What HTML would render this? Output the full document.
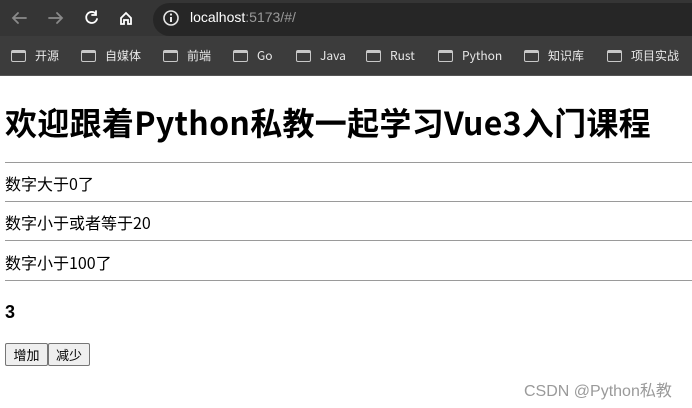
<!DOCTYPE html>
<html><head><meta charset="utf-8"><style>
*{margin:0;padding:0;box-sizing:border-box}
body{width:692px;height:408px;overflow:hidden;background:#fff;font-family:"Liberation Sans","Noto Sans CJK SC",sans-serif;position:relative}
.top{position:absolute;left:0;top:0;width:692px;height:36px;background:#353535}
.url{position:absolute;left:153px;top:3px;width:560px;height:33px;background:#262626;border-radius:17px}
.bm{position:absolute;left:0;top:36px;width:692px;height:40px;background:#3c3c3c;border-bottom:1px solid #555}
.b{position:absolute;top:12px;height:16px;line-height:16px;color:#e8e8e8;font-size:12px;white-space:nowrap;font-family:"Noto Sans CJK SC",sans-serif}
.b i{display:inline-block;vertical-align:middle;width:15px;height:12px;border:1.5px solid #c8c8c8;border-radius:2px;margin-right:9px;border-top-width:3px;position:relative;top:-1px}
.abs{position:absolute;white-space:nowrap;color:#000}
hr{position:absolute;left:5px;width:687px;border:0;border-top:1px solid #9a9a9a;height:0}
.t{font-size:16px;font-family:"Noto Sans CJK SC","Liberation Sans",sans-serif}
button{position:absolute;top:343px;height:23px;font-size:13px;font-family:"Noto Sans CJK SC",sans-serif;background:#efefef;border:1px solid #767676;border-radius:2px;line-height:19px}
</style></head><body>
<div class="top">
<svg width="150" height="36" style="position:absolute;left:0;top:0" fill="none" stroke-width="1.8" stroke-linecap="round">
<path d="M26 18H13M18 13l-5 5 5 5" stroke="#8a8a8a"/>
<path d="M49 18h13M57 13l5 5-5 5" stroke="#8a8a8a"/>
<path d="M96 14a5.5 5.5 0 1 0 1 5M96 11v4h-4" stroke="#fff"/>
<path d="M121 24v-6l5-5 5 5v6h-3v-4h-4v4z" stroke="#fff"/>
</svg>
<div class="url"></div>
<svg width="20" height="20" style="position:absolute;left:161px;top:8px"><circle cx="10" cy="10" r="7" stroke="#e8e8e8" stroke-width="1.6" fill="none"/><path d="M10 9v5" stroke="#e8e8e8" stroke-width="2"/><circle cx="10" cy="6.5" r="1.1" fill="#e8e8e8"/></svg>
<div class="abs" style="left:190px;top:9px;font-size:14px;color:#fff">localhost<span style="color:#9a9a9a">:5173/#/</span></div>
</div>
<div class="bm">
<div class="b" style="left:11px"><i></i>开源</div>
<div class="b" style="left:81px"><i></i>自媒体</div>
<div class="b" style="left:163px"><i></i>前端</div>
<div class="b" style="left:233px"><i></i>Go</div>
<div class="b" style="left:296px"><i></i>Java</div>
<div class="b" style="left:366px"><i></i>Rust</div>
<div class="b" style="left:438px"><i></i>Python</div>
<div class="b" style="left:524px"><i></i>知识库</div>
<div class="b" style="left:607px"><i></i>项目实战</div>
</div>
<div class="abs" style="left:5px;top:100px;font-size:32px;font-weight:bold;font-family:'Noto Sans CJK SC',sans-serif;line-height:44px;letter-spacing:0.3px">欢迎跟着Python私教一起学习Vue3入门课程</div>
<hr style="top:162px"><hr style="top:201px"><hr style="top:240px"><hr style="top:280px">
<div class="abs t" style="left:5px;top:171px">数字大于0了</div>
<div class="abs t" style="left:5px;top:210px">数字小于或者等于20</div>
<div class="abs t" style="left:5px;top:250px">数字小于100了</div>
<div class="abs" style="left:5px;top:302px;font-size:18px;font-weight:bold">3</div>
<button style="left:5px;width:43px">增加</button>
<button style="left:48px;width:42px">减少</button>
<div class="abs" style="left:524px;top:377px;font-size:16px;color:#9a9a9a;font-family:'Liberation Sans','Noto Sans CJK SC',sans-serif">CSDN @Python私教</div>
</body></html>
